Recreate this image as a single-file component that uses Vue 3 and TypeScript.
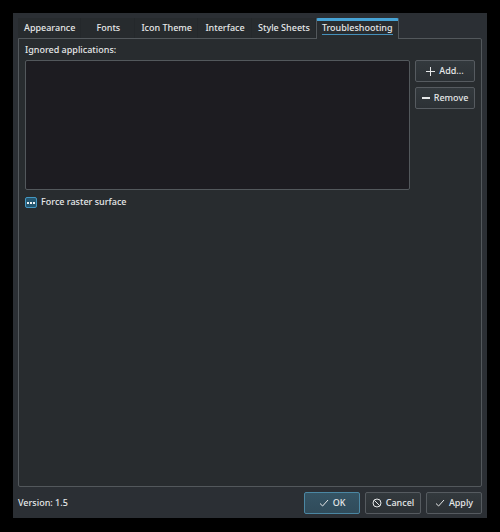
<script setup lang="ts">
import { onMounted, ref } from 'vue'

const tabs: string[] = ['Appearance', 'Fonts', 'Icon Theme', 'Interface', 'Style Sheets', 'Troubleshooting']
const current = ref<string>('Troubleshooting')
const raster = ref<HTMLInputElement | null>(null)

// The raster option starts out partially checked.
onMounted(() => {
  if (raster.value) raster.value.indeterminate = true
})
</script>

<template>
  <div class="screen">
    <main class="window">
      <nav class="tabs" role="tablist">
        <button
          v-for="tab in tabs"
          :key="tab"
          type="button"
          role="tab"
          class="tab"
          :class="{ active: tab === current }"
          :aria-selected="tab === current"
          @click="current = tab"
        >
          <span>{{ tab }}</span>
        </button>
      </nav>

      <section class="panel" role="tabpanel">
        <label class="caption" for="ignored">Ignored applications:</label>
        <div class="row">
          <select id="ignored" class="list" multiple></select>
          <div class="side">
            <button type="button" class="btn">
              <svg width="9" height="9" viewBox="0 0 9 9"><path d="M4.5 0v9M0 4.5h9" /></svg>
              Add...
            </button>
            <button type="button" class="btn">
              <svg class="thick" width="8" height="8" viewBox="0 0 8 8"><path d="M0 4h8" /></svg>
              Remove
            </button>
          </div>
        </div>
        <div class="option">
          <input id="raster" ref="raster" type="checkbox" />
          <label for="raster">Force raster surface</label>
        </div>
      </section>

      <footer class="footer">
        <span class="version">Version: 1.5</span>
        <button type="button" class="btn primary">
          <svg width="10" height="10" viewBox="0 0 10 10"><path d="M1 5.5 3.6 8 9 2" /></svg>
          OK
        </button>
        <button type="button" class="btn">
          <svg width="10" height="10" viewBox="0 0 10 10"><circle cx="5" cy="5" r="4" /><path d="M2.2 2.2 7.8 7.8" /></svg>
          Cancel
        </button>
        <button type="button" class="btn">
          <svg width="10" height="10" viewBox="0 0 10 10"><path d="M1 5.5 3.6 8 9 2" /></svg>
          Apply
        </button>
      </footer>
    </main>
  </div>
</template>

<style>
body {
  background: #000;
}
</style>

<style scoped>
.screen {
  box-sizing: border-box;
  min-height: 100vh;
  padding: 13px 13px 14px;
  display: flex;
  background: #000;
  color: #e6e8e9;
  font-family: "Noto Sans", sans-serif;
  font-size: 9px;
  font-weight: 500;
  line-height: 12px;
}

.window {
  flex: 1;
  min-width: 0;
  box-sizing: border-box;
  display: flex;
  flex-direction: column;
  padding: 5px 5px 4px;
  background: #2b2f34;
}

button {
  font: inherit;
  color: inherit;
  margin: 0;
}

.tabs {
  display: flex;
  align-items: flex-start;
  position: relative;
  margin-bottom: -1px;
}

.tab {
  box-sizing: border-box;
  display: flex;
  align-items: flex-start;
  justify-content: center;
  height: 20px;
  min-width: 54px;
  padding: 4px 5px 0 6px;
  border: 0;
  border-right: 1px solid #24282b;
  background: #272b2e;
  white-space: nowrap;
}

.tab.active {
  height: 21px;
  border: 1px solid #53585c;
  border-top: 3px solid #47a4d6;
  border-bottom: 0;
  border-radius: 2px 2px 0 0;
  background: #282c2f;
  padding: 1px 5px 0;
}

.tab.active span {
  border-bottom: 1px solid #4590ba;
}

.panel {
  flex: 1;
  padding: 5px 6px 6px;
  border: 1px solid #53585c;
  border-radius: 0 2px 2px 2px;
  background: #282c2f;
}

.caption {
  display: block;
  margin-bottom: 4px;
}

.row {
  display: flex;
  gap: 5px;
}

.list {
  flex: 1;
  min-width: 0;
  box-sizing: border-box;
  height: 130px;
  margin: 0;
  border: 1px solid #53585c;
  border-radius: 2px;
  background: #1d1c21;
  outline: none;
}

.side {
  display: flex;
  flex-direction: column;
  gap: 5px;
  width: 60px;
}

.btn {
  box-sizing: border-box;
  height: 22px;
  padding: 0 4px;
  display: flex;
  align-items: center;
  justify-content: center;
  gap: 4px;
  border: 1px solid #565b60;
  border-radius: 2px;
  background: linear-gradient(#33393d, #2c3135);
  white-space: nowrap;
}

.btn svg {
  flex: none;
  fill: none;
  stroke: #e6e8e9;
  stroke-width: 1;
}

.btn svg.thick {
  stroke-width: 2;
}

.primary {
  border-color: #4b87a3;
  background: linear-gradient(#355464, #304b5a);
}

.option {
  display: flex;
  align-items: center;
  gap: 4px;
  margin-top: 6px;
}

.option input {
  appearance: none;
  box-sizing: border-box;
  width: 12px;
  height: 11px;
  margin: 0;
  border: 1px solid #4497c2;
  border-radius: 2px;
  background: #25566f;
}

.option input:indeterminate {
  background: repeating-linear-gradient(90deg, #eef2f4 0 2px, #25566f 2px 3px) 1px 4px / 8px 2px no-repeat #25566f;
}

.footer {
  display: flex;
  align-items: center;
  gap: 5px;
  padding-top: 5px;
}

.version {
  flex: 1;
}

.footer .btn {
  width: 56px;
}
</style>
